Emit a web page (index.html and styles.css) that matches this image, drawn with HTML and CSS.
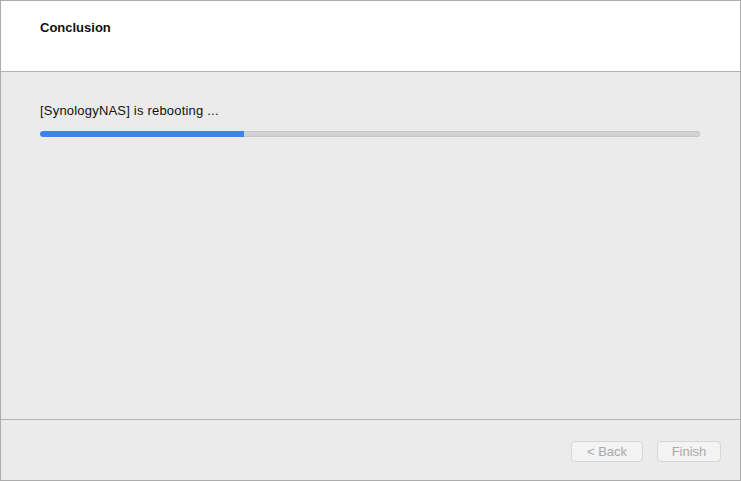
FILE: index.html
```html
<!DOCTYPE html>
<html lang="en">
<head>
    <meta charset="UTF-8">
    <title>Conclusion</title>
    <link rel="stylesheet" href="styles.css">
</head>
<body>
    <div class="wizard">
        <div class="wizard-header">
            <h2 class="wizard-title">Conclusion</h2>
        </div>
        <div class="wizard-body">
            <p class="status">[SynologyNAS] is rebooting ...</p>
            <div class="progress">
                <div class="progress-fill" style="width: 30.9%"></div>
            </div>
        </div>
        <div class="wizard-footer">
            <button class="btn btn-back" disabled>&lt; Back</button>
            <button class="btn btn-finish" disabled>Finish</button>
        </div>
    </div>
</body>
</html>
```

FILE: styles.css
```css
body {
    margin: 0;
    font-family: 'Liberation Sans', Arial, sans-serif;
    font-size: 13px;
    color: #111;
    background: #ebebeb;
}

.wizard {
    box-sizing: border-box;
    width: 741px;
    height: 481px;
    border: 1px solid #ababab;
    display: flex;
    flex-direction: column;
}

.wizard-header {
    height: 71px;
    background: #fff;
    border-bottom: 1px solid #b3b3b3;
    padding: 19px 0 0 39px;
    box-sizing: border-box;
    flex: none;
}

.wizard-title {
    margin: 0;
    font-size: 13px;
    line-height: 16px;
    font-weight: bold;
}

.wizard-body {
    flex: 1;
    padding: 31px 40px 0 39px;
    border-bottom: 1px solid #b3b3b3;
}

.status {
    margin: 0;
    line-height: 16px;
    letter-spacing: 0.2px;
}

.progress {
    margin-top: 12px;
    height: 6px;
    background: #d3d3d3;
    box-shadow: inset 0 0 0 1px #c6c6c6;
    border-radius: 3px;
    overflow: hidden;
}

.progress-fill {
    height: 100%;
    background: #3b84ef;
    border-radius: 3px 0 0 3px;
}

.wizard-footer {
    height: 60px;
    flex: none;
    box-sizing: border-box;
    padding: 21px 19px 0 0;
    display: flex;
    justify-content: flex-end;
    align-items: flex-start;
    gap: 14px;
}

.btn {
    height: 21px;
    padding: 0;
    font-family: 'Liberation Sans', Arial, sans-serif;
    font-size: 13px;
    color: #a9a9a9;
    background: #f3f3f3;
    border: 1px solid #d6d6d6;
    border-radius: 4px;
}

.btn-back {
    width: 72px;
}

.btn-finish {
    width: 64px;
}
```
